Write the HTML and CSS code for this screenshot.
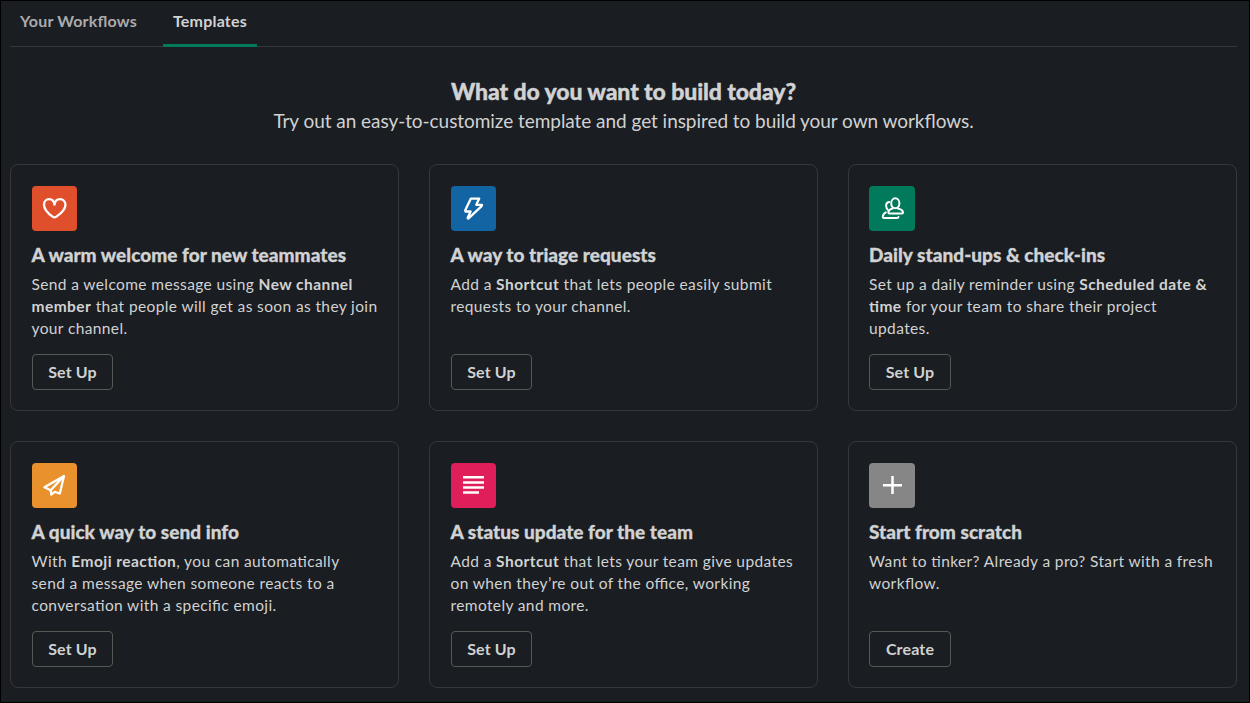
FILE: index.html
```html
<!DOCTYPE html>
<html lang="en">
<head>
<meta charset="utf-8">
<title>Workflow Builder</title>
<link rel="stylesheet" href="styles.css">
</head>
<body>
<main class="page">
  <nav class="tabs">
    <a class="tab">Your Workflows</a>
    <a class="tab active">Templates</a>
  </nav>
  <header class="intro">
    <h1>What do you want to build today?</h1>
    <p>Try out an easy-to-customize template and get inspired to build your own workflows.</p>
  </header>
  <section class="grid">
    <article class="card">
      <div class="icon red"><svg viewBox="0 0 45 45"><path d="M22.500 18.500C22 15.500 20.200 13.200 17.200 13.200C14.200 13.200 12 15.500 12 18.700C12 23.500 16.500 27.800 20.900 30.900Q22.500 32 24.100 30.900C28.500 27.800 33.500 23.500 33.500 18.700C33.500 15.500 31 13.200 28.100 13.200C25 13.200 23 15.500 22.500 18.500Z"/></svg></div>
      <h2>A warm welcome for new teammates</h2>
      <p>Send a welcome message using <b>New channel member</b> that people will get as soon as they join your channel.</p>
      <button>Set Up</button>
    </article>
    <article class="card">
      <div class="icon blue"><svg viewBox="0 0 45 45"><path d="M19.900 12.600H28.200L25.300 18.800H31L30.600 20.200L17.300 32.600L16.600 32L19.600 25.500H14.500L14.200 24.300Z"/></svg></div>
      <h2>A way to triage requests</h2>
      <p>Add a <b>Shortcut</b> that lets people easily submit requests to your channel.</p>
      <button>Set Up</button>
    </article>
    <article class="card">
      <div class="icon green people"><svg viewBox="0 0 45 45"><ellipse cx="26.300" cy="17.300" rx="4.100" ry="5"/><path d="M23.700 22.500C20.900 23.300 19.400 24.800 19.400 26.500Q19.400 27.400 20.300 27.400H33Q34 27.400 34 26.500C34 24.800 32 23.300 29 22.500M20.300 15.900C17.600 16.300 16.900 18.200 17.200 20.300C17.400 21.700 17.900 22.800 18.600 23.600M16.800 26.300C14.800 27.200 13.900 28.900 13.800 30.900Q13.800 31.900 14.800 31.900H28.200Q29.300 31.900 29.500 31"/></svg></div>
      <h2>Daily stand-ups &amp; check-ins</h2>
      <p>Set up a daily reminder using <b>Scheduled date &amp; time</b> for your team to share their project updates.</p>
      <button>Set Up</button>
    </article>
    <article class="card narrow">
      <div class="icon orange"><svg viewBox="0 0 45 45"><path d="M32 13L12.400 24.200L18.700 27.200L19.300 31.500L22.800 28.900L27.800 30.500ZM32 13L18.700 27.200"/></svg></div>
      <h2>A quick way to send info</h2>
      <p>With <b>Emoji reaction</b>, you can automatically send a message when someone reacts to a conversation with a specific emoji.</p>
      <button>Set Up</button>
    </article>
    <article class="card">
      <div class="icon pink lines"><svg viewBox="0 0 45 45"><path d="M12 14.200H33M12 19.400H33M12 24.500H33M12 29.500H28"/></svg></div>
      <h2>A status update for the team</h2>
      <p>Add a <b>Shortcut</b> that lets your team give updates on when they’re out of the office, working remotely and more.</p>
      <button>Set Up</button>
    </article>
    <article class="card">
      <div class="icon gray lines"><svg viewBox="0 0 45 45"><path d="M14 22.200H33M23.500 13V31"/></svg></div>
      <h2>Start from scratch</h2>
      <p>Want to tinker? Already a pro? Start with a fresh workflow.</p>
      <button>Create</button>
    </article>
  </section>
</main>
</body>
</html>
```
FILE: styles.css
```css
* { box-sizing: border-box; }
body { margin: 0; background: #1a1d21; color: #d1d2d3; font-family: Lato, sans-serif; font-feature-settings: "liga" 1; }
.page { height: 703px; padding: 0 12px 0 9px; border: 1px solid #000; overflow: hidden; }
.tabs { display: flex; gap: 16px; height: 46px; border-bottom: 1px solid #35373b; }
.tab { height: 46px; padding: 8px 10px 0; font-size: 16px; line-height: 24px; font-weight: 700; letter-spacing: .2px; color: #ababad; }
.tab.active { color: #d1d2d3; border-bottom: 3px solid #007a5a; }
.intro { padding-top: 29px; height: 117px; text-align: center; }
.intro h1 { margin: 0 0 1px; font-size: 23px; line-height: 30px; font-weight: 900; letter-spacing: -.09px; -webkit-text-stroke: .4px currentColor; }
.intro p { margin: 0; font-size: 19px; line-height: 28px; letter-spacing: -.05px; }
.grid { display: grid; grid-template-columns: repeat(3, 389px); column-gap: 30px; row-gap: 30px; }
.card { display: flex; flex-direction: column; align-items: flex-start; height: 247px; padding: 21px 18px 20px 20.500px; border: 1px solid #35373b; border-radius: 8px; }
.icon { width: 45px; height: 45px; border-radius: 4px; margin-left: .5px; }
.icon svg { display: block; width: 45px; height: 45px; fill: none; stroke: #fff; stroke-width: 2.300; stroke-linejoin: round; stroke-linecap: round; }
.lines svg { stroke-linecap: butt; stroke-width: 2.500; }
.people svg { stroke-width: 2; }
.red { background: #e04f2c; }
.blue { background: #1264a3; }
.green { background: #007a5a; }
.orange { background: #e8912d; }
.pink { background: #e01e5a; }
.gray { background: #868686; }
.card h2 { margin: 10px 0 4px; font-size: 19px; line-height: 28px; font-weight: 900; letter-spacing: .03px; white-space: nowrap; -webkit-text-stroke: .3px currentColor; }
.card p { margin: 0; font-size: 15.500px; line-height: 22px; letter-spacing: .38px; }
.card b { letter-spacing: .45px; }
.narrow p { max-width: 325px; }
.card button { margin: auto 0 0 .5px; width: 81px; height: 36px; padding: 0 0 2px; font: 700 16px Lato, sans-serif; letter-spacing: .15px; color: #d1d2d3; background: transparent; border: 1px solid #565856; border-radius: 4px; }
.card:nth-child(3n) { padding-left: 20px; }
.card:nth-child(3n) .icon { width: 46px; margin-left: 0; }
.card:nth-child(3n) button { width: 82px; margin-left: 0; }
```
